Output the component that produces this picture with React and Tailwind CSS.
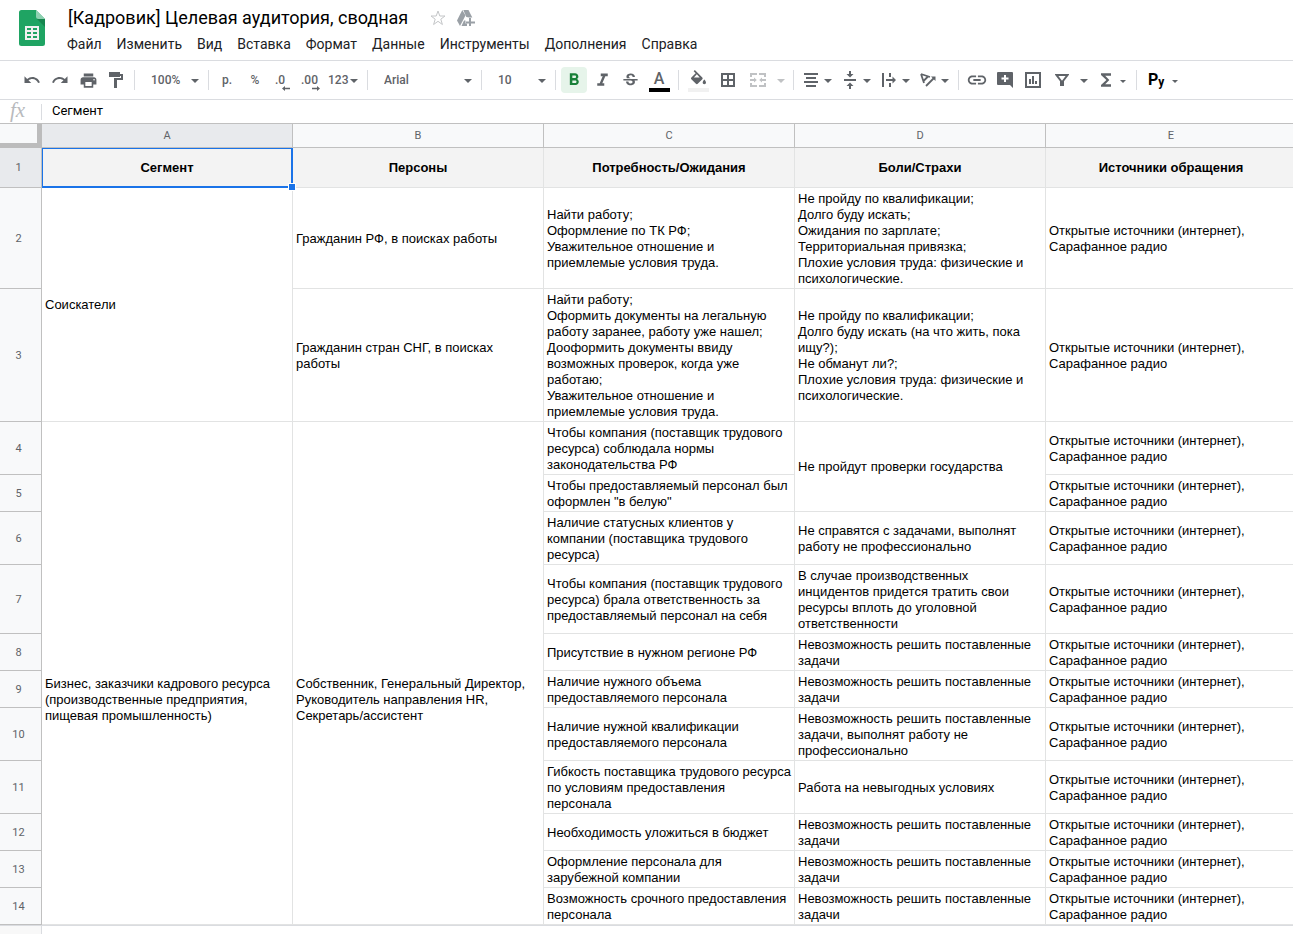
import {
  MdUndo,
  MdRedo,
  MdPrint,
  MdFormatBold,
  MdFormatItalic,
  MdStrikethroughS,
  MdLink,
  MdFunctions,
} from "react-icons/md";

const menus = [
  "Файл",
  "Изменить",
  "Вид",
  "Вставка",
  "Формат",
  "Данные",
  "Инструменты",
  "Дополнения",
  "Справка",
];

const columns = ["A", "B", "C", "D", "E"];
const titles = ["Сегмент", "Персоны", "Потребность/Ожидания", "Боли/Страхи", "Источники обращения"];

const sources = "Открытые источники (интернет),\nСарафанное радио";
const impossible = "Невозможность решить поставленные задачи";

// every row lists only the cells that start in it, merged ones carry a span
const rows = [
  [
    { text: "Соискатели", span: 2 },
    { text: "Гражданин РФ, в поисках работы" },
    { text: "Найти работу;\nОформление по ТК РФ;\nУважительное отношение и приемлемые условия труда." },
    {
      text: "Не пройду по квалификации;\nДолго буду искать;\nОжидания по зарплате;\nТерриториальная привязка;\nПлохие условия труда: физические и психологические.",
    },
    { text: sources },
  ],
  [
    { text: "Гражданин стран СНГ, в поисках\nработы" },
    {
      text: "Найти работу;\nОформить документы на легальную работу заранее, работу уже нашел;\nДооформить документы ввиду возможных проверок, когда уже работаю;\nУважительное отношение и приемлемые условия труда.",
    },
    {
      text: "Не пройду по квалификации;\nДолго буду искать (на что жить, пока ищу?);\nНе обманут ли?;\nПлохие условия труда: физические и психологические.",
    },
    { text: sources },
  ],
  [
    {
      text: "Бизнес, заказчики кадрового ресурса (производственные предприятия, пищевая промышленность)",
      span: 11,
      continues: true,
    },
    {
      text: "Собственник, Генеральный Директор, Руководитель направления HR, Секретарь/ассистент",
      span: 11,
      continues: true,
    },
    { text: "Чтобы компания (поставщик трудового ресурса) соблюдала нормы законодательства РФ" },
    { text: "Не пройдут проверки государства", span: 2 },
    { text: sources },
  ],
  [{ text: "Чтобы предоставляемый персонал был оформлен \"в белую\"" }, { text: sources }],
  [
    { text: "Наличие статусных клиентов у компании (поставщика трудового ресурса)" },
    { text: "Не справятся с задачами, выполнят работу не профессионально" },
    { text: sources },
  ],
  [
    { text: "Чтобы компания (поставщик трудового ресурса) брала ответственность за предоставляемый персонал на себя" },
    { text: "В случае производственных инцидентов придется тратить свои ресурсы вплоть до уголовной ответственности" },
    { text: sources },
  ],
  [{ text: "Присутствие в нужном регионе РФ" }, { text: impossible }, { text: sources }],
  [{ text: "Наличие нужного объема предоставляемого персонала" }, { text: impossible }, { text: sources }],
  [
    { text: "Наличие нужной квалификации предоставляемого персонала" },
    { text: "Невозможность решить поставленные задачи, выполнят работу не профессионально" },
    { text: sources },
  ],
  [
    { text: "Гибкость поставщика трудового ресурса по условиям предоставления персонала" },
    { text: "Работа на невыгодных условиях" },
    { text: sources },
  ],
  [{ text: "Необходимость уложиться в бюджет" }, { text: impossible }, { text: sources }],
  [{ text: "Оформление персонала для зарубежной компании" }, { text: impossible }, { text: sources }],
  [{ text: "Возможность срочного предоставления персонала" }, { text: impossible }, { text: sources }],
];

function Caret({ className = "w-2" }) {
  return (
    <svg viewBox="0 0 8 4" className={`shrink-0 fill-current ${className}`}>
      <path d="M0 0h8L4 4z" />
    </svg>
  );
}

function Separator() {
  return <div className="mx-1 h-5 w-px shrink-0 bg-[#dadce0]" />;
}

function Tool({ label, className = "w-7 justify-center", children }) {
  return (
    <button type="button" aria-label={label} className={`relative flex h-[26px] shrink-0 items-center ${className}`}>
      {children}
    </button>
  );
}

// icon and arrow share one button
function DropTool({ label, children }) {
  return (
    <button type="button" aria-label={label} className="flex h-[26px] w-[39px] shrink-0 items-center">
      <span className="flex w-[26px] justify-center">{children}</span>
      <Caret className="mt-px w-2" />
    </button>
  );
}

function Picker({ label, value, className }) {
  return (
    <div className={`relative flex shrink-0 items-center ${className}`}>
      <select aria-label={label} className="h-[26px] w-full appearance-none bg-transparent pl-3 outline-none">
        <option>{value}</option>
      </select>
      <Caret className="pointer-events-none absolute right-[5px] mt-px w-2" />
    </div>
  );
}

function Logo() {
  return (
    <svg viewBox="0 0 26 36" className="h-9 w-[26px] shrink-0">
      <path d="M2.500 0H17l9 9v24.500a2.500 2.500 0 0 1-2.500 2.500h-21A2.500 2.500 0 0 1 0 33.500v-31A2.500 2.500 0 0 1 2.500 0z" fill="#1fa463" />
      <path d="M17.500 8.500L26 17V9z" fill="#16864f" />
      <path d="M17 0l9 9h-6.500A2.500 2.500 0 0 1 17 6.500z" fill="#8ed1b1" />
      <path d="M6 16h14v14H6zM8 18v2h4v-2zm6 0v2h4v-2zm-6 4v2h4v-2zm6 0v2h4v-2zm-6 4v2h4v-2zm6 0v2h4v-2z" fill="#f1f1f1" fillRule="evenodd" />
    </svg>
  );
}

function Header() {
  return (
    <header className="flex h-[60px] pl-[19px] pt-[10px]">
      <Logo />
      <div className="-mt-[3px] ml-[22px]">
        <div className="flex h-[22px] items-center">
          <h1 className="whitespace-nowrap pl-px text-lg leading-[22px] text-black">[Кадровик] Целевая аудитория, сводная</h1>
          <button type="button" aria-label="Пометить" className="ml-[22px]">
            <svg viewBox="0 0 16 16" className="w-4 fill-none stroke-[#c4c6c8]">
              <path d="M8 1l1.800 5H15l-4.200 3.200L12.400 14.500 8 11.300l-4.400 3.200 1.600-5.300L1 6h5.200z" />
            </svg>
          </button>
          <button type="button" aria-label="Добавить на Диск" className="ml-[11px]">
            <svg viewBox="0 0 18 16" className="w-[18px] fill-[#9aa0a6]">
              <path d="M5.300 0L0 10.500 3 16l5.500-10.500z" />
              <path d="M6.300 0h5.200l3.800 7.500H12L9.300 7z" />
              <path d="M7 10.500L4.500 16H10v-2.500H8.500v-3z" />
              <path d="M12 8h2v3.500h4v2h-4V16h-2v-2.500H9v-2h3z" />
            </svg>
          </button>
        </div>
        <nav className="mt-1 flex gap-[15px] text-sm leading-[22px] text-[#202124]">
          {menus.map((m) => (
            <button key={m} type="button">
              {m}
            </button>
          ))}
        </nav>
      </div>
    </header>
  );
}

function Toolbar() {
  return (
    <div className="flex h-10 items-center border-y border-[#dadce0] pl-[18px] text-xs font-medium text-[#5f6368]">
      <Tool label="Отменить">
        <MdUndo size={18} />
      </Tool>
      <Tool label="Повторить">
        <MdRedo size={18} />
      </Tool>
      <Tool label="Печать">
        <MdPrint size={19} />
      </Tool>
      <Tool label="Копировать форматирование">
        <svg viewBox="0 0 14 16" className="h-4 w-[14px] fill-current">
          <path d="M0 0h11v2h3v6H8v8H5V6h7V4h-1v1H0z" />
        </svg>
      </Tool>
      <Separator />
      <Picker label="Масштаб" value="100%" className="w-[65px]" />
      <Separator />
      <Tool label="Денежный формат">р.</Tool>
      <Tool label="Процентный формат">%</Tool>
      <Tool label="Меньше знаков" className="w-7 pl-[6px]">
        .0
        <svg viewBox="0 0 8 5" className="absolute bottom-[2px] right-[7px] w-2 fill-current">
          <path d="M0 2.500L3 0v1.700h5v1.600H3V5z" />
        </svg>
      </Tool>
      <Tool label="Больше знаков" className="w-7 pl-1">
        .00
        <svg viewBox="0 0 8 5" className="absolute bottom-[2px] right-[5px] w-2 fill-current">
          <path d="M8 2.500L5 0v1.700H0v1.600h5V5z" />
        </svg>
      </Tool>
      <Tool label="Другие форматы" className="w-[38px] gap-[2px] pl-[3px]">
        123
        <Caret className="mt-px w-2" />
      </Tool>
      <Separator />
      <Picker label="Шрифт" value="Arial" className="w-[105px]" />
      <Separator />
      <Picker label="Размер шрифта" value="10" className="w-[65px]" />
      <Separator />
      <Tool label="Полужирный" className="mx-px w-[26px] justify-center rounded-sm bg-[#e6f4ea] text-[#188038]">
        <MdFormatBold size={20} />
      </Tool>
      <Tool label="Курсив">
        <MdFormatItalic size={21} />
      </Tool>
      <Tool label="Зачеркнутый">
        <MdStrikethroughS size={19} />
      </Tool>
      <Tool label="Цвет текста" className="w-[30px] justify-center">
        <span className="mb-[3px] text-base leading-4">A</span>
        <span className="absolute bottom-px h-1 w-[21px] bg-black" />
      </Tool>
      <Separator />
      <Tool label="Цвет заливки" className="w-[30px] justify-center">
        <svg viewBox="3 0 18 18" className="mb-[5px] size-[15px] fill-current">
          <path d="M16.560 8.940L7.620 0 6.210 1.410l2.380 2.380-5.150 5.150c-.59.59-.59 1.540 0 2.120l5.500 5.500c.29.29.68.44 1.060.44s.77-.15 1.060-.44l5.500-5.500c.59-.58.59-1.530 0-2.120zM6.500 9L10 5.210 13.500 9zM19 11.500s-2 2.170-2 3.500c0 1.100.9 2 2 2s2-.9 2-2c0-1.330-2-3.500-2-3.500z" />
        </svg>
        <span className="absolute bottom-px h-1 w-[21px] bg-[#f1f1f1]" />
      </Tool>
      <Tool label="Границы" className="w-[30px] justify-center">
        <svg viewBox="0 0 14 14" className="w-[14px] fill-none stroke-current stroke-2">
          <path d="M1 1h12v12H1zM7 1v12M1 7h12" />
        </svg>
      </Tool>
      <Tool label="Объединить ячейки" className="w-[30px] justify-center text-[#c0c2c4]">
        <svg viewBox="0 0 16 14" className="w-4 fill-current">
          <path d="M0 0h7v2H2v2H0zM9 0h7v4h-2V2H9zM0 10h2v2h5v2H0zM14 10h2v4H9v-2h5zM0 6h4V4.500L6.800 7 4 9.500V8H0zM16 6h-4V4.500L9.200 7 12 9.500V8h4z" />
        </svg>
      </Tool>
      <Tool label="Варианты объединения" className="w-4 justify-center text-[#c0c2c4]">
        <Caret className="mt-px w-2" />
      </Tool>
      <Separator />
      <DropTool label="Выравнивание">
        <svg viewBox="0 0 14 14" className="w-[14px] fill-current">
          <path d="M0 0h14v2H0zM2 4h10v2H2zM0 8h14v2H0zM2 12h10v2H2z" />
        </svg>
      </DropTool>
      <DropTool label="Выравнивание по вертикали">
        <svg viewBox="0 0 12 18" className="h-[18px] w-3 fill-current">
          <path d="M5 0h2v3h2.500L6 6.500 2.500 3H5zM0 8h12v2H0zM5 18h2v-3h2.500L6 11.500 2.500 15H5z" />
        </svg>
      </DropTool>
      <DropTool label="Перенос текста">
        <svg viewBox="0 0 14 14" className="w-[14px] fill-current">
          <path d="M0 0h2v14H0zM7 0h2v4H7zM7 10h2v4H7zM4 6h6.500V3.500L14 7l-3.500 3.500V8H4z" />
        </svg>
      </DropTool>
      <DropTool label="Поворот текста">
        <svg viewBox="0 0 16 14" className="w-4 fill-none stroke-current">
          <path d="M1 1l3 9M1 1l9 3M3 8.500l5-5" strokeWidth="1.800" />
          <path d="M6 13l8-8" strokeWidth="1.800" />
          <path d="M11 3.500h4.500V8z" className="fill-current stroke-none" />
        </svg>
      </DropTool>
      <Separator />
      <Tool label="Вставить ссылку">
        <MdLink size={22} />
      </Tool>
      <Tool label="Вставить комментарий">
        <svg viewBox="0 0 16 16" className="w-4">
          <path d="M1 0h14a1 1 0 0 1 1 1v15l-3-3H1a1 1 0 0 1-1-1V1a1 1 0 0 1 1-1z" fill="#5f6368" />
          <path d="M8 3v7M4.500 6.500h7" stroke="#fff" strokeWidth="2" />
        </svg>
      </Tool>
      <Tool label="Вставить диаграмму">
        <svg viewBox="0 0 16 16" className="w-4">
          <path d="M1 1h14v14H1z" fill="none" stroke="#5f6368" strokeWidth="2" />
          <path d="M4 7h2v5H4zM7 4h2v8H7zM10 9h2v3h-2z" fill="#5f6368" />
        </svg>
      </Tool>
      <Tool label="Создать фильтр" className="w-[30px] justify-center">
        <svg viewBox="0 0 14 12" className="w-[14px]" fill="none" stroke="currentColor">
          <path d="M1.500 1h11L8 7v5H6V7z" strokeWidth="2" />
        </svg>
      </Tool>
      <Tool label="Фильтры" className="w-[14px] justify-center">
        <Caret className="mt-px w-2" />
      </Tool>
      <Tool label="Функции" className="w-[29px] justify-center">
        <MdFunctions size={20} />
      </Tool>
      <Tool label="Список функций" className="mr-[6px] w-[6px] justify-center">
        <Caret className="mt-[2px] w-[6px]" />
      </Tool>
      <Separator />
      <Tool label="Способ ввода" className="w-10 gap-2 pl-[7px] text-black">
        <span className="flex items-end font-bold leading-4">
          <span className="text-base leading-4">P</span>
          <span className="text-xs leading-3">y</span>
        </span>
        <Caret className="mt-[2px] w-[6px] text-[#5f6368]" />
      </Tool>
    </div>
  );
}

function FormulaBar() {
  return (
    <div className="flex h-6 items-center border-b border-[#c0c0c0]">
      <label
        htmlFor="formula"
        className="w-[41px] pb-[3px] pl-[10px] font-['Liberation_Serif',serif] text-[21px] italic leading-5 text-[#b8babd]"
      >
        fx
      </label>
      <div className="h-4 w-px bg-[#dadce0]" />
      <input
        id="formula"
        defaultValue="Сегмент"
        className="min-w-0 flex-1 pb-[2px] pl-[10px] text-[13px] leading-5 text-black outline-none"
      />
    </div>
  );
}

function Sheet() {
  return (
    <table className="w-[1297px] table-fixed border-separate border-spacing-0 border-b border-[#dadce0] text-[13px] leading-4 text-black">
      <colgroup>
        <col className="w-[42px]" />
        {columns.map((c) => (
          <col key={c} />
        ))}
      </colgroup>
      <thead>
        <tr className="h-6 font-[Roboto,sans-serif] text-[11px] text-[#5f6368]">
          <td className="border-b-[5px] border-r-[5px] border-[#bcbcbc] bg-[#f8f9fa]" />
          {columns.map((c, i) => (
            <th
              key={c}
              scope="col"
              className={`border-b border-r border-[#c0c0c0] p-0 text-center font-normal ${i === 0 ? "bg-[#e8eaed]" : "bg-[#f8f9fa]"}`}
            >
              {c}
            </th>
          ))}
        </tr>
      </thead>
      <tbody className="font-['Liberation_Sans',Arial,sans-serif]">
        <tr className="h-10">
          <RowHead n={1} active />
          {titles.map((t, i) => (
            <td key={t} className="relative border-b border-r border-[#e2e3e3] bg-[#f3f3f3] px-[3px] py-0 text-center font-bold">
              {t}
              {i === 0 && (
                <>
                  <span className="absolute -bottom-px -right-px left-0 top-0 border-b-2 border-l border-r-2 border-t border-[#1a73e8]" />
                  <span className="absolute -bottom-1 -right-1 z-10 size-[8px] border border-white bg-[#1a73e8]" />
                </>
              )}
            </td>
          ))}
        </tr>
        {rows.map((cells, r) => (
          <tr key={r}>
            <RowHead n={r + 2} />
            {cells.map((cell, i) => (
              <td
                key={i}
                rowSpan={cell.span}
                className={`whitespace-pre-line border-b border-r border-[#e2e3e3] pl-[3px] pr-[2px] align-middle ${cell.continues ? "pb-[2px] pt-14" : cell.span ? "py-[2px]" : "pb-px pt-[3px]"}`}
              >
                {cell.text}
              </td>
            ))}
          </tr>
        ))}
      </tbody>
    </table>
  );
}

function RowHead({ n, active }) {
  return (
    <th
      scope="row"
      className={`border-b border-r border-[#c0c0c0] pb-0 pl-0 pr-1 text-center font-[Roboto,sans-serif] text-[11px] font-normal text-[#5f6368] ${active ? "bg-[#e8eaed] pt-0" : "bg-[#f8f9fa] pt-[2px]"}`}
    >
      {n}
    </th>
  );
}

export default function App() {
  return (
    <div className="flex h-screen flex-col overflow-hidden bg-white font-[Roboto,sans-serif]">
      <Header />
      <Toolbar />
      <FormulaBar />
      <main className="flex min-h-0 flex-1 flex-col overflow-hidden">
        <Sheet />
        <div className="w-[42px] flex-1 border-r border-[#dadce0] bg-[#f8f8f8]" />
      </main>
    </div>
  );
}
